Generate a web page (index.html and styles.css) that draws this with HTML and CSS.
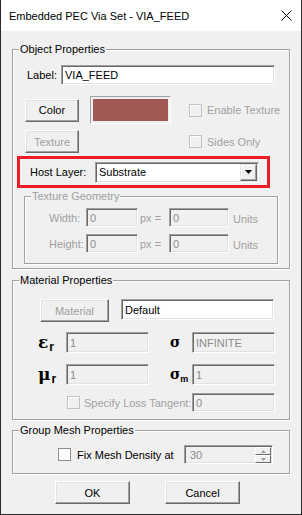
FILE: index.html
```html
<!DOCTYPE html>
<html>
<head>
  <title>Embedded PEC Via Set - VIA_FEED</title>
  <link rel="stylesheet" href="styles.css">
</head>
<body>
  <div class="dialog">
    <div class="titlebar">
      <span class="title">Embedded PEC Via Set - VIA_FEED</span>
      <svg class="close" width="11" height="11" viewBox="0 0 11 11">
        <path d="M0.5 0.5 L10.5 10.5 M10.5 0.5 L0.5 10.5" stroke="#000" stroke-width="1" fill="none"/>
      </svg>
    </div>

    <div class="content">
      <!-- object properties -->
      <fieldset class="group object-group">
        <legend>Object Properties</legend>
        <div class="label-row">
          <span class="label-text">Label:</span>
          <input class="field label-field" value="VIA_FEED">
        </div>
        <div class="color-row">
          <button class="btn small-btn">Color</button>
          <div class="swatch"><div class="swatch-fill"></div></div>
          <span class="check-item first-check"><span class="check"></span><span class="muted">Enable Texture</span></span>
        </div>
        <div class="texture-row">
          <button class="btn small-btn disabled">Texture</button>
          <span class="check-item second-check"><span class="check"></span><span class="muted">Sides Only</span></span>
        </div>
        <div class="host-box">
          <span class="host-label">Host Layer:</span>
          <div class="select">
            <span class="select-text">Substrate</span>
            <span class="select-btn">
              <svg width="7" height="4" viewBox="0 0 7 4"><path d="M0 0 H7 L3.5 4 Z" fill="#000"/></svg>
            </span>
          </div>
        </div>
        <fieldset class="group geo-group">
          <legend class="muted">Texture Geometry</legend>
          <div class="geo-row first-geo">
            <span class="geo-label muted">Width:</span>
            <input class="field geo-px" value="0" disabled>
            <span class="geo-eq muted">px =</span>
            <input class="field geo-units" value="0" disabled>
            <span class="geo-unit muted">Units</span>
          </div>
          <div class="geo-row second-geo">
            <span class="geo-label muted">Height:</span>
            <input class="field geo-px" value="0" disabled>
            <span class="geo-eq muted">px =</span>
            <input class="field geo-units" value="0" disabled>
            <span class="geo-unit muted">Units</span>
          </div>
        </fieldset>
      </fieldset>

      <!-- material properties -->
      <fieldset class="group material-group">
        <legend>Material Properties</legend>
        <div class="material-row">
          <button class="btn material-btn disabled">Material</button>
          <input class="field material-field" value="Default">
        </div>
        <div class="param-row eps-row">
          <span class="sym sym-left">&epsilon;<sub>r</sub></span>
          <input class="field param-field" value="1" disabled>
          <span class="sym sym-right sigma">&sigma;</span>
          <input class="field param-field" value="INFINITE" disabled>
        </div>
        <div class="param-row mu-row">
          <span class="sym sym-left">&mu;<sub>r</sub></span>
          <input class="field param-field" value="1" disabled>
          <span class="sym sym-right sigma">&sigma;<sub class="sub-m">m</sub></span>
          <input class="field param-field" value="1" disabled>
        </div>
        <div class="loss-row">
          <span class="check loss-check"></span>
          <span class="loss-text muted">Specify Loss Tangent:</span>
          <input class="field param-field loss-field" value="0" disabled>
        </div>
      </fieldset>

      <!-- mesh -->
      <fieldset class="group mesh-group">
        <legend>Group Mesh Properties</legend>
        <div class="mesh-row">
          <span class="check enabled-check"></span>
          <span class="mesh-text">Fix Mesh Density at</span>
          <div class="spin">
            <span class="spin-text">30</span>
            <span class="spin-btns">
              <span class="spin-btn"><svg width="5" height="3" viewBox="0 0 5 3"><path d="M2.5 0 L5 3 H0 Z" fill="#a0a0a0"/></svg></span>
              <span class="spin-btn"><svg width="5" height="3" viewBox="0 0 5 3"><path d="M0 0 H5 L2.5 3 Z" fill="#a0a0a0"/></svg></span>
            </span>
          </div>
        </div>
      </fieldset>

      <div class="actions">
        <button class="btn action-btn">OK</button>
        <button class="btn action-btn">Cancel</button>
      </div>
    </div>
  </div>
</body>
</html>
```

FILE: styles.css
```css
* {
  box-sizing: border-box;
}
body {
  margin: 0;
  font-family: 'Liberation Sans', Arial, sans-serif;
  font-size: 11px;
  color: #000;
  background: #fff;
}
.dialog {
  width: 302px;
  height: 515px;
  background: #f0f0f0;
  border: 1px solid #2b2b2b;
  border-top: none;
}
.titlebar {
  height: 31px;
  background: #fff;
  display: flex;
  align-items: center;
  justify-content: space-between;
  padding: 0 9px 0 8px;
}
.title {
  font-size: 11px;
  color: #000;
}
.content {
  padding: 11px 11px 0;
}
.muted {
  color: #a0a0a0;
}

/* group boxes */
.group {
  margin: 0;
  padding: 0;
  min-width: 0;
  border: 1px solid #a0a0a0;
  box-shadow: inset 1px 1px 0 #fff, 1px 1px 0 #fff;
}
.group legend {
  margin-left: 6px;
  padding: 0 1px;
  height: 14px;
  line-height: 14px;
  background: #f0f0f0;
}
.object-group {
  padding-bottom: 4px;
}
.material-group {
  margin-top: 4px;
  padding-bottom: 7px;
}
.mesh-group {
  margin-top: 3px;
  padding-bottom: 9px;
}

/* edit fields */
.field {
  font-family: inherit;
  font-size: 11px;
  color: #000;
  background: #fff;
  padding: 0 0 0 3px;
  margin: 0;
  border: 1px solid;
  border-color: #a0a0a0 #fff #fff #a0a0a0;
  box-shadow: inset 1px 1px 0 #696969, inset -1px -1px 0 #e3e3e3;
  outline: none;
}
.field:disabled {
  background: #f0f0f0;
  color: #8c8c8c;
}

/* push buttons */
.btn {
  font-family: inherit;
  font-size: 11px;
  color: #000;
  background: #f0f0f0;
  margin: 0;
  padding: 0;
  border: 1px solid;
  border-color: #fff #696969 #696969 #fff;
  box-shadow: inset -1px -1px 0 #a0a0a0, inset 1px 1px 0 #e3e3e3;
}
.btn.disabled {
  color: #a0a0a0;
}
.small-btn {
  width: 54px;
  height: 23px;
}

/* check boxes */
.check {
  display: inline-block;
  flex: none;
  width: 13px;
  height: 13px;
  background: #f0f0f0;
  border: 1px solid #c2c2c2;
  box-shadow: inset 1px 1px 0 #fff;
}
.enabled-check {
  background: #fff;
  border-color: #8f8f8f;
  box-shadow: none;
}
.check-item {
  display: flex;
  align-items: center;
  gap: 5px;
}

/* object properties rows */
.label-row {
  display: flex;
  align-items: center;
  height: 20px;
  margin-top: 9px;
  padding-left: 14px;
}
.label-text {
  width: 34px;
}
.label-field {
  width: 214px;
  height: 20px;
}
.color-row {
  display: flex;
  align-items: center;
  height: 28px;
  margin-top: 11px;
  padding-left: 12px;
}
.swatch {
  width: 81px;
  height: 28px;
  margin-left: 11px;
  padding: 2px;
  border: 1px solid;
  border-color: #a0a0a0 #fff #fff #a0a0a0;
}
.swatch-fill {
  width: 100%;
  height: 100%;
  background: #a05955;
}
.first-check {
  margin-left: 18px;
}
.texture-row {
  display: flex;
  align-items: center;
  height: 23px;
  margin-top: 6px;
  padding-left: 12px;
}
.second-check {
  margin-left: 110px;
}

/* highlighted host layer */
.host-box {
  display: flex;
  align-items: center;
  width: 253px;
  height: 32px;
  margin: 3px 0 0 4px;
  padding-left: 10px;
  border: 3px solid #ed1c24;
}
.host-label {
  width: 65px;
}
.select {
  display: flex;
  align-items: center;
  justify-content: space-between;
  width: 164px;
  height: 21px;
  padding: 2px 2px 2px 3px;
  background: #fff;
  border: 1px solid;
  border-color: #a0a0a0 #fff #fff #a0a0a0;
  box-shadow: inset 1px 1px 0 #696969, inset -1px -1px 0 #e3e3e3;
}
.select-btn {
  display: flex;
  align-items: center;
  justify-content: center;
  width: 17px;
  height: 17px;
  margin-right: -1px;
  background: #f0f0f0;
  border: 1px solid;
  border-color: #e3e3e3 #696969 #696969 #e3e3e3;
  box-shadow: inset -1px -1px 0 #a0a0a0, inset 1px 1px 0 #fff;
}

/* texture geometry */
.geo-group {
  width: 254px;
  margin: 1px 0 0 11px;
  padding-bottom: 10px;
}
.geo-row {
  display: flex;
  align-items: center;
  height: 19px;
  padding-left: 24px;
}
.first-geo {
  margin-top: 5px;
}
.second-geo {
  margin-top: 7px;
}
.geo-label {
  width: 37px;
}
.geo-px {
  width: 52px;
  height: 19px;
}
.geo-eq {
  width: 29px;
  margin-left: 2px;
}
.geo-units {
  width: 60px;
  height: 19px;
}
.geo-unit {
  margin-left: 4px;
  padding-top: 3px;
}

/* material properties */
.material-row {
  display: flex;
  align-items: flex-start;
  margin-top: 12px;
  padding-left: 27px;
}
.material-btn {
  width: 69px;
  height: 23px;
}
.material-field {
  width: 153px;
  height: 21px;
  margin-left: 12px;
}
.param-row {
  display: flex;
  align-items: center;
  height: 21px;
  padding-left: 25px;
}
.eps-row {
  margin-top: 10px;
}
.mu-row {
  margin-top: 11px;
}
.sym {
  font-family: 'DejaVu Serif', serif;
  font-weight: bold;
  font-size: 17px;
  line-height: 21px;
  height: 21px;
}
.sym sub {
  font-family: 'Liberation Sans', Arial, sans-serif;
  font-size: 12px;
  line-height: 0;
  vertical-align: -3px;
  margin-left: 1px;
}
.sym-left {
  width: 28px;
}
.sym-right {
  width: 22px;
  margin-left: 21px;
}
.sigma {
  font-size: 14px;
}
.sym .sub-m {
  font-size: 9px;
  margin-left: 0;
}
.param-field {
  width: 83px;
  height: 21px;
}
.loss-row {
  display: flex;
  align-items: center;
  height: 19px;
  margin-top: 8px;
  padding-left: 54px;
}
.loss-text {
  width: 108px;
  margin-left: 4px;
}
.loss-field {
  height: 19px;
}

/* mesh */
.mesh-row {
  display: flex;
  align-items: center;
  height: 19px;
  margin-top: 8px;
  padding-left: 45px;
}
.mesh-text {
  width: 107px;
  margin-left: 6px;
}
.spin {
  display: flex;
  align-items: center;
  justify-content: space-between;
  width: 89px;
  height: 19px;
  padding: 1px 1px 1px 5px;
  background: #f0f0f0;
  border: 1px solid;
  border-color: #a0a0a0 #fff #fff #a0a0a0;
  box-shadow: inset 1px 1px 0 #696969, inset -1px -1px 0 #e3e3e3;
}
.spin-text {
  color: #8c8c8c;
}
.spin-btns {
  display: flex;
  flex-direction: column;
  width: 16px;
  height: 17px;
  padding-top: 1px;
}
.spin-btn {
  display: flex;
  align-items: center;
  justify-content: center;
  height: 8px;
  background: #f0f0f0;
  border: 1px solid;
  border-color: #fff #696969 #696969 #fff;
}

/* dialog buttons */
.actions {
  display: flex;
  gap: 35px;
  margin-top: 7px;
  padding-left: 43px;
}
.action-btn {
  width: 75px;
  height: 23px;
}
```
